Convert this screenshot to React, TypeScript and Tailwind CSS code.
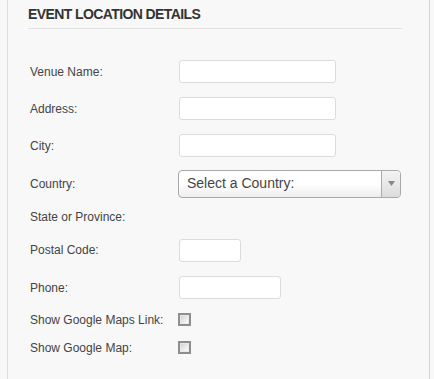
import React from "react";

const rows: { label: string; kind: "text" | "select" | "none" | "check"; w?: number; h: number }[] = [
  { label: "Venue Name:", kind: "text", w: 157, h: 37 },
  { label: "Address:", kind: "text", w: 157, h: 37 },
  { label: "City:", kind: "text", w: 157, h: 37 },
  { label: "Country:", kind: "select", h: 39 },
  { label: "State or Province:", kind: "none", h: 28 },
  { label: "Postal Code:", kind: "text", w: 62, h: 38 },
  { label: "Phone:", kind: "text", w: 102, h: 37 },
  { label: "Show Google Maps Link:", kind: "check", h: 27 },
  { label: "Show Google Map:", kind: "check", h: 29 },
];

function Field({ kind, w }: { kind: string; w?: number }) {
  if (kind === "text") {
    return (
      <input
        type="text"
        style={{ width: w }}
        className="h-[23px] bg-white border border-[#dcdcdc] rounded-[3px] outline-none"
      />
    );
  }
  if (kind === "select") {
    return (
      <div className="-ml-px w-[223px] h-[28px] flex rounded-[4px] border border-[#aaa] bg-gradient-to-b from-white from-50% to-[#eee] overflow-hidden">
        <span className="flex-1 pl-[8px] flex items-center text-[14px] text-[#444]">Select a Country:</span>
        <span className="w-[19px] border-l border-[#aaa] bg-gradient-to-b from-[#f4f4f4] to-[#dcdcdc] flex items-center justify-center">
          <svg width="7" height="5" viewBox="0 0 7 5">
            <path d="M0 0h7L3.5 5z" fill="#888" />
          </svg>
        </span>
      </div>
    );
  }
  if (kind === "check") {
    return (
      <span className="-ml-px w-[13px] h-[13px] border-2 border-[#8e8e8e] flex">
        <span className="flex-1 border border-[#e8e8e8] bg-gradient-to-br from-[#cfd3d8] to-white" />
      </span>
    );
  }
  return null;
}

export default function App() {
  return (
    <div className="w-[434px] h-[379px] bg-[#f8f8f8] font-['Liberation_Sans',Arial,sans-serif]">
      <div className="ml-[7px] w-[423px] h-[379px] border-l border-r border-[#dedede] border-r-[#d4d4d4] pl-[20px] pr-[27px]">
        <h2 className="pt-[4px] pb-[4px] text-[14px] leading-[20px] font-bold tracking-[-0.6px] text-[#333] border-b border-[#e2e2e2]">
          EVENT LOCATION DETAILS
        </h2>
        <div className="pt-[24px] pl-[2px]">
          {rows.map((r) => (
            <div key={r.label} style={{ height: r.h }} className="flex items-center">
              <span className="w-[149px] shrink-0 text-[12px] text-[#444]">{r.label}</span>
              <Field kind={r.kind} w={r.w} />
            </div>
          ))}
        </div>
      </div>
    </div>
  );
}
